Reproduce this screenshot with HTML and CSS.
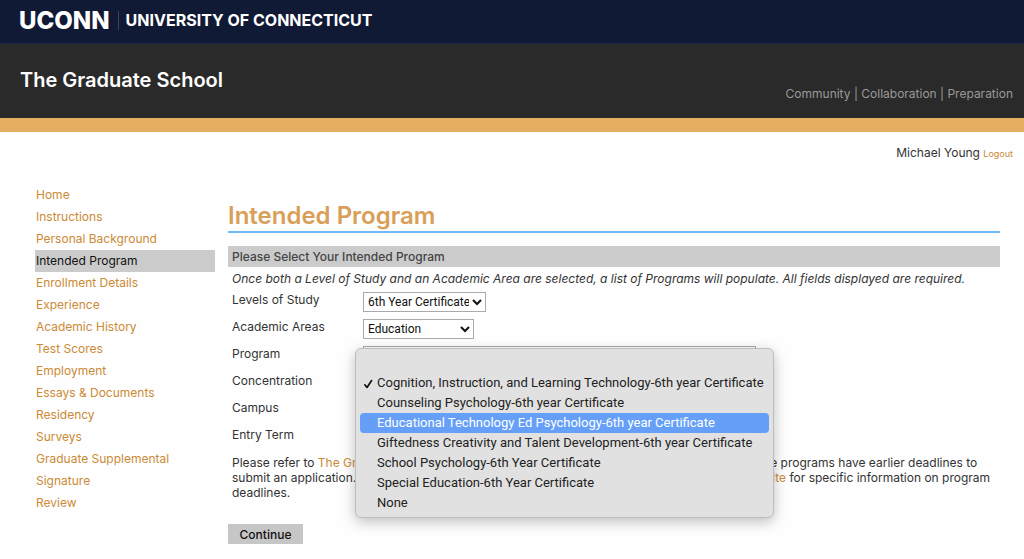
FILE: index.html
```
<!DOCTYPE html>
<html lang="en">
<head>
<meta charset="utf-8">
<meta name="viewport" content="width=device-width, initial-scale=1">
<title>Intended Program - The Graduate School</title>
<link rel="stylesheet" href="styles.css">
</head>
<body>
<header>
  <div class="brand-bar">
    <a class="brand-mark" href="#">UCONN</a>
    <a class="brand-name" href="#">UNIVERSITY OF CONNECTICUT</a>
  </div>
  <div class="school-bar">
    <a class="school-name" href="#">The Graduate School</a>
    <span class="tagline">Community | Collaboration | Preparation</span>
  </div>
</header>
<div class="account"><span>Michael Young</span> <a class="logout" href="#">Logout</a></div>
<div class="layout">
  <nav class="side-nav" aria-label="Application">
    <a href="#">Home</a>
    <a href="#">Instructions</a>
    <a href="#">Personal Background</a>
    <a href="#" class="current" aria-current="page">Intended Program</a>
    <a href="#">Enrollment Details</a>
    <a href="#">Experience</a>
    <a href="#">Academic History</a>
    <a href="#">Test Scores</a>
    <a href="#">Employment</a>
    <a href="#">Essays &amp; Documents</a>
    <a href="#">Residency</a>
    <a href="#">Surveys</a>
    <a href="#">Graduate Supplemental</a>
    <a href="#">Signature</a>
    <a href="#">Review</a>
  </nav>
  <main class="content">
    <h1>Intended Program</h1>
    <h2>Please Select Your Intended Program</h2>
    <p class="hint">Once both a Level of Study and an Academic Area are selected, a list of Programs will populate. All fields displayed are required.</p>
    <form class="fields">
      <div class="field">
        <label for="level">Levels of Study</label>
        <select id="level" class="level"><option>6th Year Certificate</option></select>
      </div>
      <div class="field">
        <label for="area">Academic Areas</label>
        <select id="area" class="area"><option>Education</option></select>
      </div>
      <div class="field">
        <label for="program">Program</label>
        <div class="program-cell">
          <select id="program" class="program"><option>Cognition, Instruction, and Learning Technology-6th year Certificate</option></select>
          <ul class="menu" role="listbox" aria-label="Program">
            <li role="option" aria-label="Blank"></li>
            <li role="option" aria-selected="true"><svg class="tick" viewBox="0 0 10 10" aria-hidden="true"><path d="M1.8 5.8 4 8.4 8.6 1.6"/></svg>Cognition, Instruction, and Learning Technology-6th year Certificate</li>
            <li role="option">Counseling Psychology-6th year Certificate</li>
            <li role="option" class="active">Educational Technology Ed Psychology-6th year Certificate</li>
            <li role="option">Giftedness Creativity and Talent Development-6th year Certificate</li>
            <li role="option">School Psychology-6th Year Certificate</li>
            <li role="option">Special Education-6th Year Certificate</li>
            <li role="option">None</li>
          </ul>
        </div>
      </div>
      <div class="field">
        <label for="concentration">Concentration</label>
        <select id="concentration" class="area"><option></option></select>
      </div>
      <div class="field">
        <label for="campus">Campus</label>
        <select id="campus" class="area"><option></option></select>
      </div>
      <div class="field">
        <label for="term">Entry Term</label>
        <select id="term" class="area"><option></option></select>
      </div>
      <p class="note">Please refer to <a href="#">The Graduate School website</a> for all general application deadlines to apply. Some programs have earlier deadlines to submit an application. Please also refer to the individual graduate or certification <a href="#">program website</a> for specific information on program deadlines.</p>
      <button type="button" class="continue">Continue</button>
    </form>
  </main>
</div>
</body>
</html>
```
FILE: styles.css
```
* { box-sizing: border-box; }

body {
  margin: 0;
  background: #fefefe;
  color: #333;
  font: 12px/15px Inter, "Liberation Sans", sans-serif;
}

a { color: #cb8a35; text-decoration: none; }

.brand-bar {
  display: flex;
  align-items: center;
  gap: 7px;
  height: 44px;
  padding: 0 19px 3px;
  background: #111a35;
  border-bottom: 1px solid #1e2b4b;
}
.brand-bar a { color: #fff; }
.brand-mark {
  padding-right: 8px;
  border-right: 1px solid #3b435a;
  font-size: 24px;
  line-height: 19px;
  font-weight: 800;
}
.brand-name { font-size: 16px; font-weight: 700; }

.school-bar {
  display: flex;
  justify-content: space-between;
  height: 74px;
  padding: 24px 11px 0 20px;
  background: #2a2a2a;
}
.school-name { color: #fff; font-size: 20px; line-height: 24px; font-weight: 600; }
.tagline { padding-top: 18px; color: #999; }
header { border-bottom: 14px solid #e6ae60; }

.account { padding: 13px 11px 0; line-height: 16px; text-align: right; }
.logout { font-size: 9px; }

.layout {
  display: grid;
  grid-template-columns: 180px 1fr;
  gap: 13px;
  padding: 22px 24px 16px 35px;
}
.side-nav { display: flex; flex-direction: column; }
.side-nav a { padding-left: 1px; line-height: 22px; }
.side-nav .current { background: #cbcbcb; color: #111; }

.content { padding-top: 18px; }
h1 {
  margin: 0;
  padding-bottom: 1px;
  border-bottom: 2px solid #6fb9f6;
  color: #d99f58;
  font-size: 24px;
  line-height: 28px;
  font-weight: 600;
}
h2 {
  margin: 13px 0 0;
  padding: 0 4px;
  background: #cbcbcb;
  color: #444;
  font-size: 12px;
  line-height: 21px;
  font-weight: 500;
}
.hint { margin: 0; padding: 0 4px; line-height: 23px; font-style: italic; }

.field { display: grid; grid-template-columns: 131px 1fr; height: 27px; padding-left: 4px; }
.field label { line-height: 20px; }
select {
  height: 20px;
  margin-top: 2px;
  padding: 0;
  border: 1px solid #aaa;
  border-radius: 0;
  background: #fff;
  color: #111;
  font: 12px Roboto, sans-serif;
}
.level { width: 123px; }
.area { width: 111px; }
.program { display: block; width: 393px; }

.program-cell { position: relative; }
.menu {
  position: absolute;
  top: 4px;
  left: -8px;
  z-index: 2;
  width: 419px;
  margin: 0;
  padding: 4px;
  border: 1px solid #bdbdbd;
  border-radius: 6px;
  background: #e1e1e1;
  box-shadow: 0 4px 14px rgba(0, 0, 0, .25);
  color: #222;
  font: 13px/20px Roboto, sans-serif;
  list-style: none;
}
.menu li { position: relative; height: 20px; padding-left: 17px; border-radius: 4px; white-space: nowrap; }
.menu .active { background: #659ff8; color: #fff; }
.tick {
  position: absolute;
  left: 3px;
  top: 6px;
  width: 10px;
  height: 10px;
  fill: none;
  stroke: #111;
  stroke-width: 1.7;
  stroke-linecap: round;
  stroke-linejoin: round;
}

.note { margin: 3px 0 24px; padding: 0 4px; }
.continue {
  display: block;
  width: 75px;
  height: 20px;
  padding: 0;
  border: 0;
  background: #c6c6c6;
  color: #111;
  font: 500 12px Inter, sans-serif;
}
```
